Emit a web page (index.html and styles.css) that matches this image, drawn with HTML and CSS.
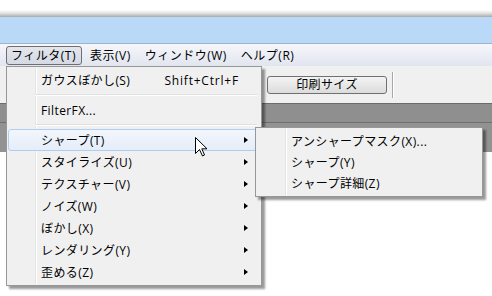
FILE: index.html
```html
<!doctype html>
<html lang="ja">
<head>
    <meta charset="UTF-8">
    <title>フィルタ メニュー</title>
    <link rel="stylesheet" href="styles.css">
</head>
<body>
<div class="screen">
    <div class="shade"></div>
    <div class="titlebar"></div>
    <div class="menubar">
        <span class="mb-item active">フィルタ(T)</span>
        <span class="mb-item">表示(V)</span>
        <span class="mb-item">ウィンドウ(W)</span>
        <span class="mb-item">ヘルプ(R)</span>
    </div>
    <div class="toolbar">
        <div class="tb-btn">印刷サイズ</div>
        <span class="tb-sep"></span>
    </div>
    <div class="ruler"></div>
    <div class="canvas"></div>

    <!-- フィルタ メニュー -->
    <div class="menu main-menu">
        <div class="mi"><span class="label">ガウスぼかし(S)</span><span class="key">Shift+Ctrl+F</span><span class="arrow none"></span></div>
        <div class="sep"></div>
        <div class="mi"><span class="label">FilterFX...</span></div>
        <div class="sep"></div>
        <div class="mi hover"><span class="label">シャープ(T)</span><span class="arrow"></span></div>
        <div class="mi"><span class="label">スタイライズ(U)</span><span class="arrow"></span></div>
        <div class="mi"><span class="label">テクスチャー(V)</span><span class="arrow"></span></div>
        <div class="mi"><span class="label">ノイズ(W)</span><span class="arrow"></span></div>
        <div class="mi"><span class="label">ぼかし(X)</span><span class="arrow"></span></div>
        <div class="mi"><span class="label">レンダリング(Y)</span><span class="arrow"></span></div>
        <div class="mi"><span class="label">歪める(Z)</span><span class="arrow"></span></div>
    </div>

    <!-- シャープ サブメニュー -->
    <div class="menu sub-menu">
        <div class="mi"><span class="label">アンシャープマスク(X)...</span></div>
        <div class="mi"><span class="label">シャープ(Y)</span></div>
        <div class="mi"><span class="label">シャープ詳細(Z)</span></div>
    </div>

    <svg class="cursor" width="13" height="20" viewBox="0 0 13 20">
        <path d="M0.5 0.5 L0.5 16.5 L4.5 12.5 L7.5 19 L9.5 18 L6.8 11.8 L12 11.8 Z" fill="#fff" stroke="#000" stroke-width="1" stroke-linejoin="round"/>
    </svg>
</div>
</body>
</html>
```

FILE: styles.css
```css
*{
    box-sizing: border-box;
}
body{
    margin: 0;
    background: #fff;
    font-family: "Open Sans", "Noto Sans CJK JP", sans-serif;
    font-size: 12px;
    color: #000;
}
.screen{
    position: relative;
    width: 492px;
    height: 296px;
    overflow: hidden;
}
.shade{
    height: 17px;
    background: linear-gradient(#fff 0, #fff 10px, #e4e4e4 13px, #a9a9a9 17px);
}
.titlebar{
    height: 27px;
    background: #bad9f9;
    border-bottom: 1px solid #9fb3c9;
}
.menubar{
    display: flex;
    height: 22px;
    padding: 2px 0 0 6px;
    gap: 2px;
    letter-spacing: 0.5px;
    background: linear-gradient(#f6f7fb, #e1e5ef);
}
.mb-item{
    height: 19px;
    line-height: 17px;
    padding: 0 5px 0 4px;
    border: 1px solid transparent;
    white-space: nowrap;
}
.mb-item + .mb-item{
    margin-left: 1px;
}
.mb-item.active{
    border-color: #6d6f75;
    border-radius: 3px;
    background: linear-gradient(#e4e6ec, #d5d9e3);
}
.toolbar{
    display: flex;
    align-items: center;
    gap: 5px;
    height: 37px;
    padding-left: 267px;
    background: #f0f0f0;
}
.tb-btn{
    width: 120px;
    height: 18px;
    line-height: 16px;
    text-align: center;
    letter-spacing: 0.4px;
    border: 1px solid #707070;
    border-radius: 3px;
    background: linear-gradient(#f4f4f4, #dcdcdc);
    margin-top: 1px;
}
.tb-sep{
    width: 2px;
    height: 26px;
    border-left: 1px solid #a8a8a8;
    border-right: 1px solid #fff;
}
.ruler{
    height: 49px;
    background: linear-gradient(#6c6c6c 0, #6c6c6c 1px, #8f8f8f 1px, #8f8f8f 19px, #6f6f6f 19px, #6f6f6f 20px, #929292 20px);
}
.canvas{
    height: 144px;
    background: #fff;
}

/* menus */
.menu{
    position: absolute;
    background-color: #f0f0f0;
    border: 1px solid #979797;
    box-shadow: 3px 3px 2px rgba(0, 0, 0, 0.4);
    padding: 2px 2px 2px 1px;
    letter-spacing: 0.4px;
}
.main-menu{
    left: 6px;
    top: 66px;
    width: 256px;
    height: 220px;
    background-image: linear-gradient(to right, transparent 28px, #e2e3e3 28px, #e2e3e3 29px, #fff 29px, #fff 30px, transparent 30px);
}
.sub-menu{
    left: 255px;
    top: 127px;
    width: 228px;
    height: 70px;
    padding-bottom: 3px;
    background-image: linear-gradient(to right, transparent 29px, #e2e3e3 29px, #e2e3e3 30px, #fff 30px, #fff 31px, transparent 31px);
}
.mi{
    display: flex;
    align-items: center;
    height: 22px;
    padding-left: 32px;
    border: 1px solid transparent;
    border-radius: 3px;
    white-space: nowrap;
}
.sub-menu .mi{
    height: 21px;
    padding-left: 33px;
}
.mi.hover{
    border-color: #aecdf3;
    background: linear-gradient(#f3f6fc, #e4edf9);
}
.label{
    flex: 1;
}
.key{
    margin-right: 5px;
    letter-spacing: 0.8px;
}
.arrow{
    width: 14px;
    height: 7px;
    position: relative;
}
.arrow::before{
    content: "";
    position: absolute;
    left: 0;
    top: 0;
    border-left: 4px solid #000;
    border-top: 3.5px solid transparent;
    border-bottom: 3.5px solid transparent;
}
.arrow.none::before{
    display: none;
}
.sep{
    height: 8px;
    margin: 0 2px 0 27px;
    background: linear-gradient(transparent 3px, #e0e0e0 3px, #e0e0e0 4px, #fff 4px, #fff 5px, transparent 5px);
}
.cursor{
    position: absolute;
    left: 195px;
    top: 137px;
}
```
